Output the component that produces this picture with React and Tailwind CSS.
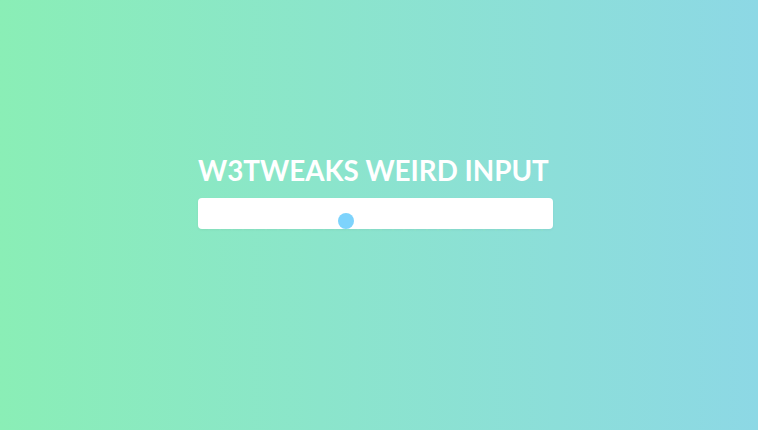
import React from 'react';

export default function App() {
  return (
    <div className="w-[758px] h-[430px] bg-gradient-to-r from-[#8aeeb6] to-[#8dd8e5] pl-[198px] pt-[153px] font-['Lato',sans-serif]">
      <div className="w-[355px] flex flex-col">
        {/* Title */}
        <h1 className="text-[27.8px] leading-[36px] font-bold text-white">
          W3TWEAKS WEIRD INPUT
        </h1>

        {/* Weird input box */}
        <div className="mt-[9px] w-[355px] h-[31px] bg-white rounded-[4px] relative shadow-[0_1px_3px_rgba(0,0,0,0.05)]">
          <div className="absolute bottom-[-2px] left-[10px] right-[10px] flex justify-between opacity-40">
            {Array.from({ length: 30 }).map((_, i) => (
              <span key={i} className="w-[2px] h-[2px] bg-[#8ee4c6]" />
            ))}
          </div>
          <span className="absolute left-[140px] top-[15px] w-[16px] h-[16px] rounded-full bg-[#7dd3fc]" />
        </div>
      </div>
    </div>
  );
}
